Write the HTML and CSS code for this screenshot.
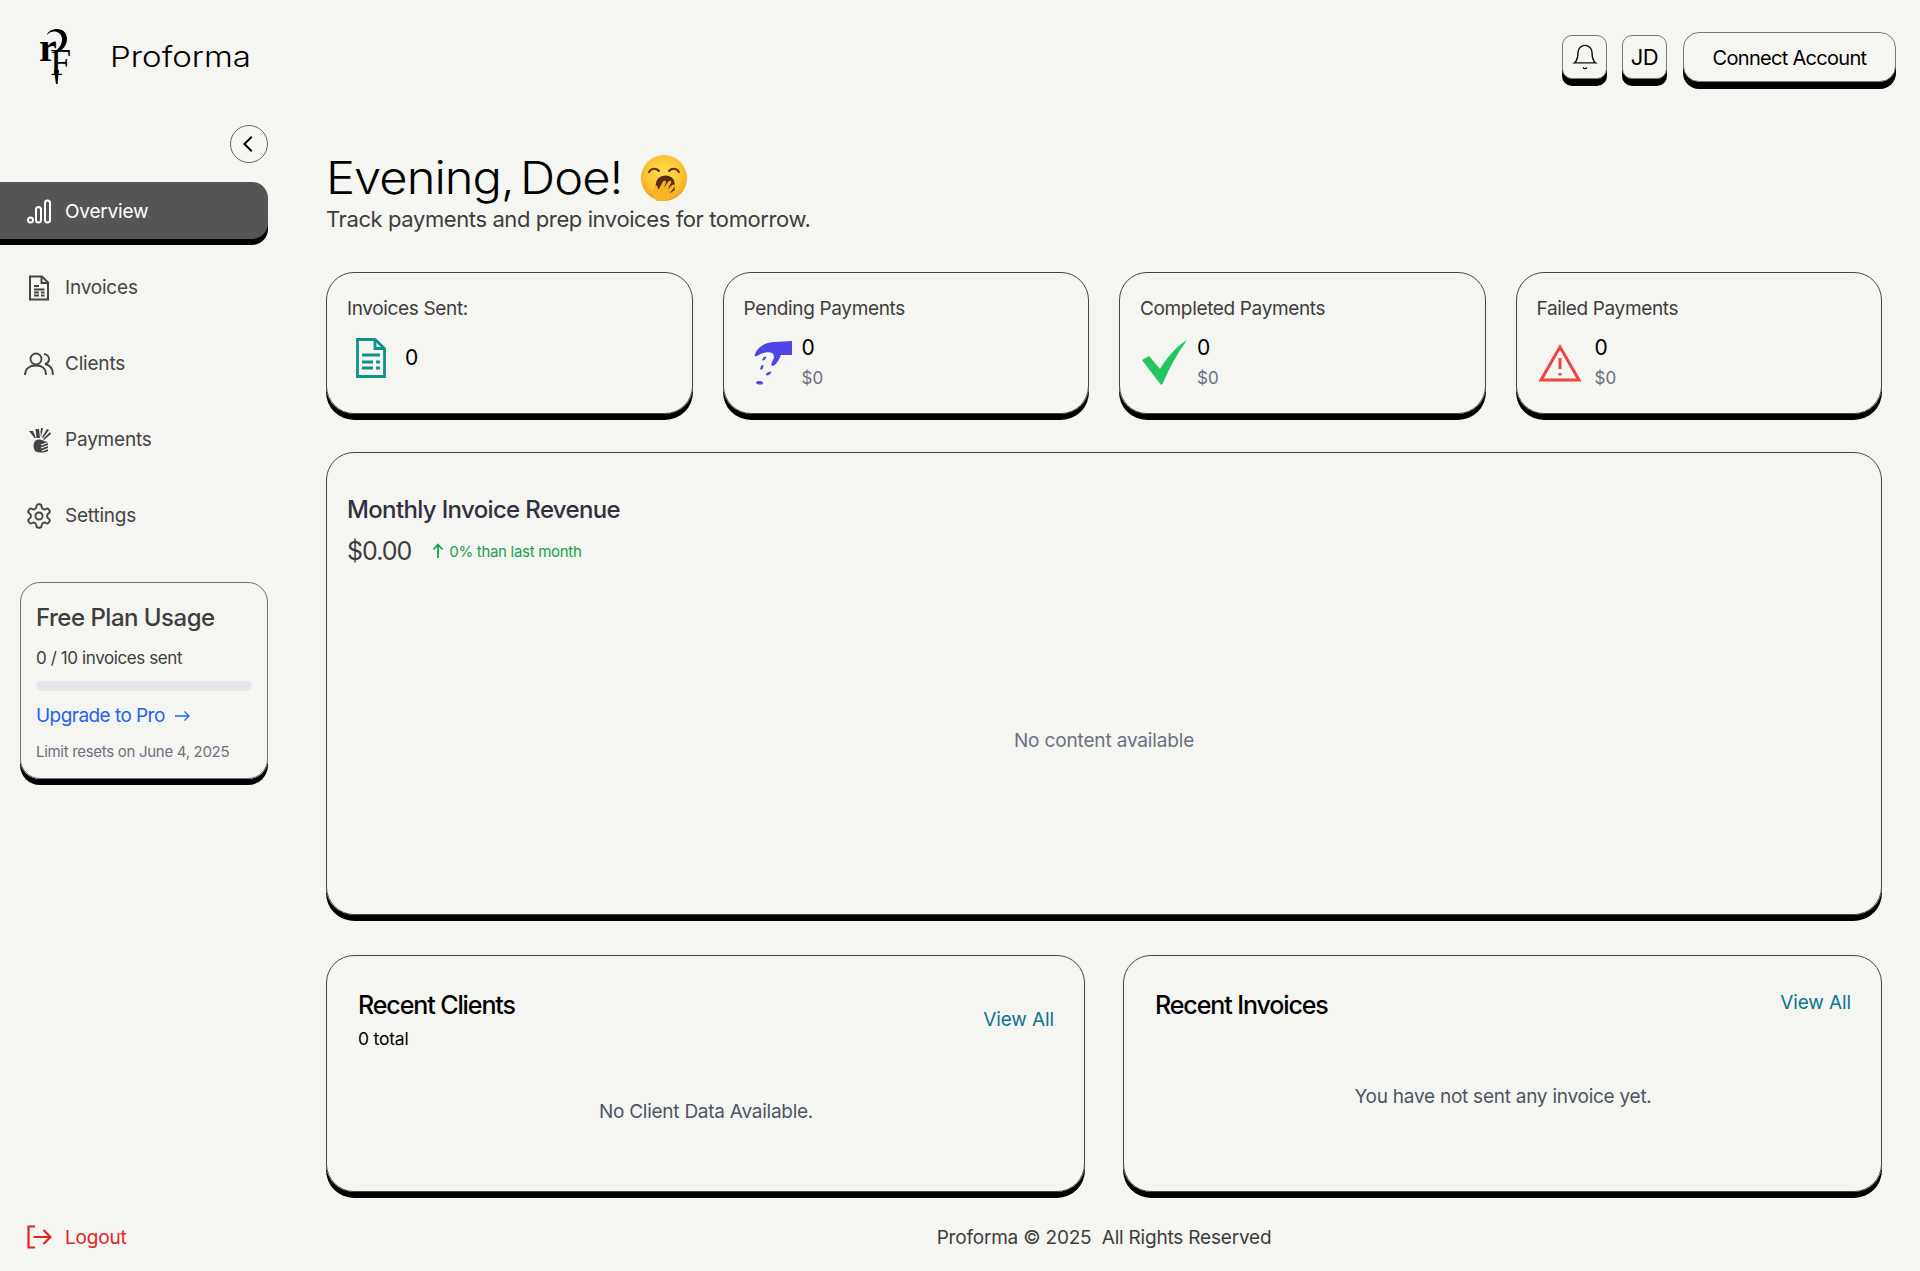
FILE: index.html
```html
<!doctype html>

<html>

<head>
    <meta charset='utf-8'>
    <title>Proforma</title>
    <link rel="stylesheet" href="styles.css">
</head>

<body>
    <header class="topbar">
        <div class="brand">
            <svg class="brand-logo" viewBox="0 0 36 56">
                <text x="2" y="33" class="logo-r">r</text>
                <path class="logo-curl" d="M10 7 C12 -1 30 -2 30 11 C30 20 21 26 14 25 C20 23 25.500 18 25 10 C24 3 15 1 10 7 Z" />
                <text x="13" y="47" class="logo-f">F</text>
                <path class="logo-stem" d="M17 42 L22 42 L20.500 56 L19 56 Z" />
            </svg>
            <span class="brand-name">Proforma</span>
        </div>
        <div class="top-actions">
            <button class="top-btn square">
                <svg class="bell" viewBox="0 0 24 24">
                    <path d="M10.300 21a1.940 1.940 0 0 0 3.400 0" />
                    <path d="M6 8a6 6 0 0 1 12 0c0 7 3 9 3 9H3s3-2 3-9" />
                </svg>
            </button>
            <button class="top-btn square">JD</button>
            <button class="top-btn connect">Connect Account</button>
        </div>
    </header>

    <div class="layout">
        <aside class="sidebar">
            <button class="collapse">
                <svg viewBox="0 0 24 24"><path d="M15 4 L7 12 L15 20" /></svg>
            </button>

            <nav class="nav">
                <a class="nav-item active">
                    <svg class="nav-icon" viewBox="0 0 26 26">
                        <circle cx="4.500" cy="21" r="2.500" />
                        <rect x="10" y="8" width="5" height="15.500" rx="2.500" />
                        <rect x="19" y="1.500" width="5" height="22" rx="2.500" />
                    </svg>
                    Overview
                </a>
                <a class="nav-item">
                    <svg class="nav-icon" viewBox="0 0 26 26">
                        <path d="M4 1.500 H16 L22 7.500 V24.500 H4 Z" />
                        <path d="M15.500 1.500 V8 H22" />
                        <path d="M8 11 H13 M8 14.500 H18.500 M8 17.500 H13 M15 17.500 H18.500 M8 20.500 H13 M15 20.500 H18.500" />
                    </svg>
                    Invoices
                </a>
                <a class="nav-item">
                    <svg class="nav-icon wide" viewBox="0 0 30 24">
                        <circle cx="12" cy="7" r="5.500" />
                        <path d="M1 23 C1 16 6 13.500 12 13.500 C18 13.500 22 16 22 23" />
                        <path d="M20 1.800 C24 2.500 25.500 5.500 25 8 C24.600 10 23 11.500 21 12 C26 13 29 16.500 29 23" />
                    </svg>
                    Clients
                </a>
                <a class="nav-item">
                    <svg class="nav-icon" viewBox="0 0 26 26">
                        <path class="solid" d="M10.500 11 L9.500 2 L13 2 L14 11 Z M7 4 L10 11 L8.500 11 L3 4 Z M17 1 L15 10 L14.500 5 L15 1 Z M23 3 L17 11 L16 10 L21 2 Z M25 7 L18 13 L17 12 L24 5 Z" />
                        <path class="solid" d="M9 14 C11 12 15 12 18 14 L22 15 L22 24 C18 26 12 26 9 24 C7 21 7 17 9 14 Z" />
                        <path class="cut" d="M15 18 L22 15.500 M15 21 L22 18.500 M16 24 L22 21.500" />
                    </svg>
                    Payments
                </a>
                <a class="nav-item">
                    <svg class="nav-icon gear" viewBox="1 1 22 22">
                        <path d="M12.220 2h-.44a2 2 0 0 0-2 2v.18a2 2 0 0 1-1 1.730l-.43.25a2 2 0 0 1-2 0l-.15-.08a2 2 0 0 0-2.730.73l-.22.38a2 2 0 0 0 .73 2.730l.15.1a2 2 0 0 1 1 1.720v.51a2 2 0 0 1-1 1.740l-.15.09a2 2 0 0 0-.73 2.730l.22.38a2 2 0 0 0 2.730.73l.15-.08a2 2 0 0 1 2 0l.43.25a2 2 0 0 1 1 1.730V20a2 2 0 0 0 2 2h.44a2 2 0 0 0 2-2v-.18a2 2 0 0 1 1-1.730l.43-.25a2 2 0 0 1 2 0l.15.08a2 2 0 0 0 2.730-.73l.22-.39a2 2 0 0 0-.73-2.730l-.15-.08a2 2 0 0 1-1-1.740v-.5a2 2 0 0 1 1-1.740l.15-.09a2 2 0 0 0 .73-2.730l-.22-.38a2 2 0 0 0-2.730-.73l-.15.08a2 2 0 0 1-2 0l-.43-.25a2 2 0 0 1-1-1.730V4a2 2 0 0 0-2-2z" />
                        <circle cx="12" cy="12" r="3" />
                    </svg>
                    Settings
                </a>
            </nav>

            <div class="plan">
                <h3>Free Plan Usage</h3>
                <p class="plan-count">0 / 10 invoices sent</p>
                <div class="plan-bar"></div>
                <a class="plan-link">Upgrade to Pro
                    <svg viewBox="0 0 16 12"><path d="M1 6 H15 M10.500 1.500 L15 6 L10.500 10.500" /></svg>
                </a>
                <p class="plan-limit">Limit resets on June 4, 2025</p>
            </div>

            <a class="logout">
                <svg viewBox="0 0 26 24">
                    <path d="M9 1.500 H2.500 V22.500 H9" />
                    <path d="M7.500 12 H24.500 M17.500 5 L24.500 12 L17.500 19" />
                </svg>
                Logout
            </a>
        </aside>

        <main class="main">
            <div class="greeting">
                <h1>Evening, Doe!</h1>
                <svg class="yawn" viewBox="0 0 46 46">
                    <defs>
                        <radialGradient id="face" cx="50%" cy="40%" r="60%">
                            <stop offset="0" stop-color="#ffdd55" />
                            <stop offset="0.7" stop-color="#fcc22e" />
                            <stop offset="1" stop-color="#f39a1c" />
                        </radialGradient>
                    </defs>
                    <circle cx="23" cy="23" r="23" fill="url(#face)" />
                    <path class="eye" d="M8 17 C10 13 15 13 18 16 M28 16 C31 13 36 13 38 17" />
                    <g transform="translate(3,6) scale(0.9)">
                        <path d="M13 27 C13 19 19 16 24 16 C29 16 34 19 34 25 L34 36 L14 36 Z" fill="#5b2c12" />
                        <path class="palm" d="M15 45 C10 41 9 34 12 28 C13 26 15 27 15 29 L16 32 L21 23 C22 21 25 22 24.500 24 L22 30 L27 23 C28.500 21 31 22 30 24.500 L26 32 L31 27 C33 25 35 27 34 29 L28 36 L33 33 C35 32 36 34 35 36 C32 41 25 46 15 45 Z" />
                    </g>
                </svg>
            </div>
            <p class="subtitle">Track payments and prep invoices for tomorrow.</p>

            <section class="stats">
                <div class="card stat">
                    <h4>Invoices Sent:</h4>
                    <div class="stat-row single">
                        <svg class="stat-icon doc" viewBox="0 0 30 40">
                            <path d="M1.500 1.500 H19 L28.500 10.500 V38.500 H1.500 Z" />
                            <path d="M19 1.500 V10.500 H28.500" />
                            <path d="M6 17 H24 M6 24 H17 M20 24 H24 M6 30 H17 M20 30 H24" />
                        </svg>
                        <div class="num">0</div>
                    </div>
                </div>
                <div class="card stat">
                    <h4>Pending Payments</h4>
                    <div class="stat-row">
                        <svg class="stat-icon hand" viewBox="0 0 38 46">
                            <path d="M38 1 L38 15 L27 15 C25 20 22 25 19 26 C17 26 17 24 18 22 C20 19 21 15 18 13 C14 11 8 13 3 16 C1 17 0 16 1 14 C4 6 13 2 20 2 Z" />
                            <path d="M9 18 C11 16 13 16 12 18 C11 20 9 21 8 20 Z M7 26 C9 24 10 25 9 28 C8 30 7 30 6 29 Z M12 34 C15 31 18 31 17 33 C16 35 13 36 12 35 Z M2 42 C5 40 9 41 9 43 C9 45 4 45 2 43 Z" />
                        </svg>
                        <div>
                            <div class="num">0</div>
                            <div class="amount">$0</div>
                        </div>
                    </div>
                </div>
                <div class="card stat">
                    <h4>Completed Payments</h4>
                    <div class="stat-row">
                        <svg class="stat-icon check" viewBox="0 0 45 46">
                            <path d="M0 20 L7 16 L18 29 C25 17 34 7 45 0 C35 14 27 28 21 43 L19 45 Z" />
                        </svg>
                        <div>
                            <div class="num">0</div>
                            <div class="amount">$0</div>
                        </div>
                    </div>
                </div>
                <div class="card stat">
                    <h4>Failed Payments</h4>
                    <div class="stat-row">
                        <svg class="stat-icon warn" viewBox="0 0 42 38">
                            <path d="M21 3 L40 36 H2 Z" />
                            <path d="M21 14 V25" />
                            <path d="M21 29 V31.500" />
                        </svg>
                        <div>
                            <div class="num">0</div>
                            <div class="amount">$0</div>
                        </div>
                    </div>
                </div>
            </section>

            <section class="card revenue">
                <h2>Monthly Invoice Revenue</h2>
                <div class="revenue-line">
                    <span class="revenue-total">$0.00</span>
                    <span class="trend">
                        <svg viewBox="0 0 12 16"><path d="M6 15 V2 M1.500 6.500 L6 1.500 L10.500 6.500" /></svg>
                        0% than last month
                    </span>
                </div>
                <div class="empty">No content available</div>
            </section>

            <section class="recent">
                <div class="card recent-card">
                    <div class="recent-head centered">
                        <div>
                            <h3>Recent Clients</h3>
                            <p class="recent-total">0 total</p>
                        </div>
                        <a class="view-all">View All</a>
                    </div>
                    <div class="empty dark">No Client Data Available.</div>
                </div>
                <div class="card recent-card">
                    <div class="recent-head">
                        <h3>Recent Invoices</h3>
                        <a class="view-all">View All</a>
                    </div>
                    <div class="empty dark">You have not sent any invoice yet.</div>
                </div>
            </section>

            <footer class="footer">Proforma © 2025&nbsp; All Rights Reserved</footer>
        </main>
    </div>
</body>

</html>
```

FILE: styles.css
```css
* {
    box-sizing: border-box;
}

body {
    margin: 0;
    height: 1271px;
    overflow: hidden;
    background: #f5f5f1;
    color: #3d3d3d;
    font-family: Inter, "Liberation Sans", sans-serif;
}

h1, h2, h3, h4, p {
    margin: 0;
    font-weight: 400;
}

button {
    font-family: inherit;
    background: #f5f5f1;
    cursor: pointer;
}

/* top bar */
.topbar {
    height: 116px;
    display: flex;
    justify-content: space-between;
    padding: 28px 24px 0 37px;
}

.brand {
    display: flex;
    align-items: flex-start;
}

.brand-logo {
    width: 36px;
    height: 56px;
    overflow: visible;
}

.logo-r {
    font-family: "Liberation Serif", serif;
    font-size: 40px;
    font-weight: 700;
    fill: #000;
}

.logo-f {
    font-family: "Liberation Serif", serif;
    font-size: 38px;
    fill: #000;
}

.logo-curl,
.logo-stem {
    fill: #000;
}

/* the brand face is wider than anything installed */
.brand-name {
    margin: 12px 0 0 37px;
    font-size: 28px;
    font-weight: 300;
    line-height: 34px;
    color: #000;
    transform: scaleX(1.18);
    transform-origin: left;
}

.top-actions {
    display: flex;
    gap: 15px;
    align-items: flex-start;
    padding-top: 4px;
}

.top-btn {
    border: 1px solid #777;
    border-radius: 10px;
    box-shadow: 0 7px 0 #000;
    color: #000;
}

.top-btn.square {
    width: 45px;
    height: 44px;
    margin-top: 3px;
    padding: 0;
    font-size: 22px;
    letter-spacing: -0.5px;
}

.bell {
    width: 28px;
    height: 28px;
    fill: none;
    stroke: #111;
    stroke-width: 1.200;
    display: block;
    margin: auto;
}

.connect {
    width: 213px;
    height: 50px;
    margin-left: 1px;
    padding-top: 2px;
    border-radius: 16px;
    font-size: 20px;
    letter-spacing: -0.7px;
}

/* sidebar + main */
.layout {
    display: grid;
    grid-template-columns: 268px 1fr;
    height: 1155px;
}

.sidebar {
    display: flex;
    flex-direction: column;
    padding: 9px 0 21px;
}

.collapse {
    align-self: flex-end;
    width: 38px;
    height: 38px;
    padding: 0;
    border: 1px solid #666;
    border-radius: 50%;
    margin-bottom: 19px;
}

.collapse svg {
    width: 22px;
    height: 22px;
    display: block;
    margin: auto;
    fill: none;
    stroke: #000;
    stroke-width: 2.200;
}

.nav {
    display: flex;
    flex-direction: column;
    gap: 19px;
}

.nav-item {
    height: 57px;
    display: flex;
    align-items: center;
    gap: 13px;
    padding: 2px 0 0 26px;
    font-size: 19px;
    color: #444;
    letter-spacing: -0.2px;
}

.nav-item.active {
    background: #555;
    color: #fff;
    border-radius: 0 16px 16px 0;
    box-shadow: 0 6px 0 #000;
}

.nav-icon {
    width: 26px;
    height: 26px;
    flex: none;
    fill: none;
    stroke: currentColor;
    stroke-width: 2;
}

.nav-icon.wide {
    width: 30px;
    height: 24px;
    margin: 0 -2px;
    stroke-width: 1.800;
}

.nav-icon.gear {
    stroke-width: 1.600;
}

.nav-icon .solid {
    fill: #444;
    stroke: none;
}

.nav-icon .cut {
    stroke: #f5f5f1;
    stroke-width: 1.200;
}

.plan {
    margin: 39px 0 0 20px;
    height: 197px;
    border: 1px solid #6b7280;
    border-radius: 20px;
    box-shadow: 0 6px 0 #000;
    padding: 19px 15px 0;
}

.plan h3 {
    font-size: 24px;
    line-height: 32px;
    font-weight: 500;
    letter-spacing: -0.5px;
}

.plan-count {
    margin-top: 12px;
    font-size: 17px;
    line-height: 24px;
    letter-spacing: -0.4px;
}

.plan-bar {
    height: 10px;
    margin-top: 11px;
    border-radius: 5px;
    background: #e5e7eb;
}

.plan-link {
    margin-top: 12px;
    display: flex;
    align-items: center;
    gap: 9px;
    font-size: 19px;
    line-height: 26px;
    color: #2563eb;
    letter-spacing: -0.55px;
}

.plan-link svg {
    width: 16px;
    height: 12px;
    fill: none;
    stroke: #2563eb;
    stroke-width: 1.300;
}

.plan-limit {
    margin-top: 12px;
    font-size: 15px;
    line-height: 22px;
    color: #6b7280;
    letter-spacing: -0.3px;
}

.logout {
    margin-top: auto;
    display: flex;
    align-items: center;
    gap: 13px;
    padding-left: 26px;
    height: 26px;
    font-size: 19px;
    color: #dc2626;
    letter-spacing: -0.2px;
}

.logout svg {
    width: 26px;
    height: 24px;
    fill: none;
    stroke: #dc2626;
    stroke-width: 2.200;
}

.main {
    display: flex;
    flex-direction: column;
    margin: 0 38px 0 58px;
    padding-top: 36px;
}

.greeting {
    display: flex;
    align-items: center;
    gap: 17px;
    height: 52px;
}

.greeting h1 {
    margin-right: 25px;
    font-size: 45px;
    font-weight: 300;
    line-height: 52px;
    color: #000;
    letter-spacing: -0.9px;
    word-spacing: -6px;
    transform: scaleX(1.085);
    transform-origin: left;
}

.yawn {
    width: 46px;
    height: 46px;
}

.eye {
    fill: none;
    stroke: #5b2c12;
    stroke-width: 2;
    stroke-linecap: round;
}

.palm {
    fill: #f9b42a;
}

.subtitle {
    margin-top: 1px;
    font-size: 22px;
    line-height: 28px;
    letter-spacing: -0.4px;
}

.card {
    border: 1px solid #444;
    border-radius: 28px;
    box-shadow: 0 6px 0 #000;
}

.stats {
    margin-top: 39px;
    display: grid;
    grid-template-columns: repeat(4, 1fr);
    gap: 30px;
}

.stat {
    height: 142px;
    padding: 22px 20px 0;
}

.stat h4 {
    font-size: 19px;
    line-height: 28px;
    letter-spacing: -0.35px;
}

.stat-row {
    margin-top: 13px;
    display: flex;
    gap: 10px;
    align-items: center;
}

.stat-row.single {
    margin-top: 15px;
    gap: 19px;
    padding-left: 9px;
}

.stat-icon {
    flex: none;
}

.doc {
    width: 30px;
    height: 40px;
    fill: none;
    stroke: #0d9488;
    stroke-width: 2.800;
}

.hand {
    width: 38px;
    height: 46px;
    margin-left: 10px;
    fill: #4f46e5;
}

.check {
    width: 45px;
    height: 46px;
    fill: #22c55e;
    margin-left: 2px;
}

.warn {
    width: 42px;
    height: 38px;
    margin: 0 4px 0 2px;
    fill: none;
    stroke: #ef4444;
    stroke-width: 3;
}

.num {
    font-size: 21px;
    line-height: 24px;
    color: #000;
}

.amount {
    margin-top: 6px;
    font-size: 17px;
    line-height: 24px;
    color: #6b7280;
}

.revenue {
    margin-top: 38px;
    height: 463px;
    padding: 41px 20px 0;
    display: flex;
    flex-direction: column;
}

.revenue h2 {
    font-size: 24px;
    line-height: 32px;
    font-weight: 500;
    color: #30303f;
    letter-spacing: -0.65px;
}

.revenue-line {
    margin-top: 9px;
    display: flex;
    align-items: center;
    gap: 21px;
    height: 32px;
}

.revenue-total {
    font-size: 25px;
    letter-spacing: -1px;
}

.trend {
    display: flex;
    align-items: center;
    gap: 5px;
    font-size: 15px;
    color: #16a34a;
    letter-spacing: -0.3px;
}

.trend svg {
    width: 12px;
    height: 16px;
    fill: none;
    stroke: #16a34a;
    stroke-width: 1.800;
}

.empty {
    flex: 1;
    display: flex;
    align-items: center;
    justify-content: center;
    font-size: 19px;
    color: #6b7280;
    letter-spacing: -0.15px;
}

.empty.dark {
    color: #4b5563;
    letter-spacing: -0.25px;
}

.recent {
    margin-top: 40px;
    display: grid;
    grid-template-columns: 1fr 1fr;
    gap: 38px;
}

.recent-card {
    height: 237px;
    padding: 33px 30px 20px 31px;
    display: flex;
    flex-direction: column;
}

.recent-head {
    display: flex;
    justify-content: space-between;
    align-items: flex-start;
}

.recent-head.centered {
    align-items: center;
}

.recent-head h3 {
    font-size: 25px;
    line-height: 32px;
    font-weight: 500;
    color: #000;
    letter-spacing: -1.1px;
}

.recent-total {
    margin-top: 6px;
    font-size: 17.500px;
    line-height: 24px;
    color: #000;
    letter-spacing: -0.2px;
}

.view-all {
    font-size: 19px;
    line-height: 28px;
    color: #0e7490;
    letter-spacing: -0.1px;
}

.footer {
    margin-top: 32px;
    text-align: center;
    font-size: 19px;
    line-height: 28px;
    letter-spacing: -0.2px;
}
```
